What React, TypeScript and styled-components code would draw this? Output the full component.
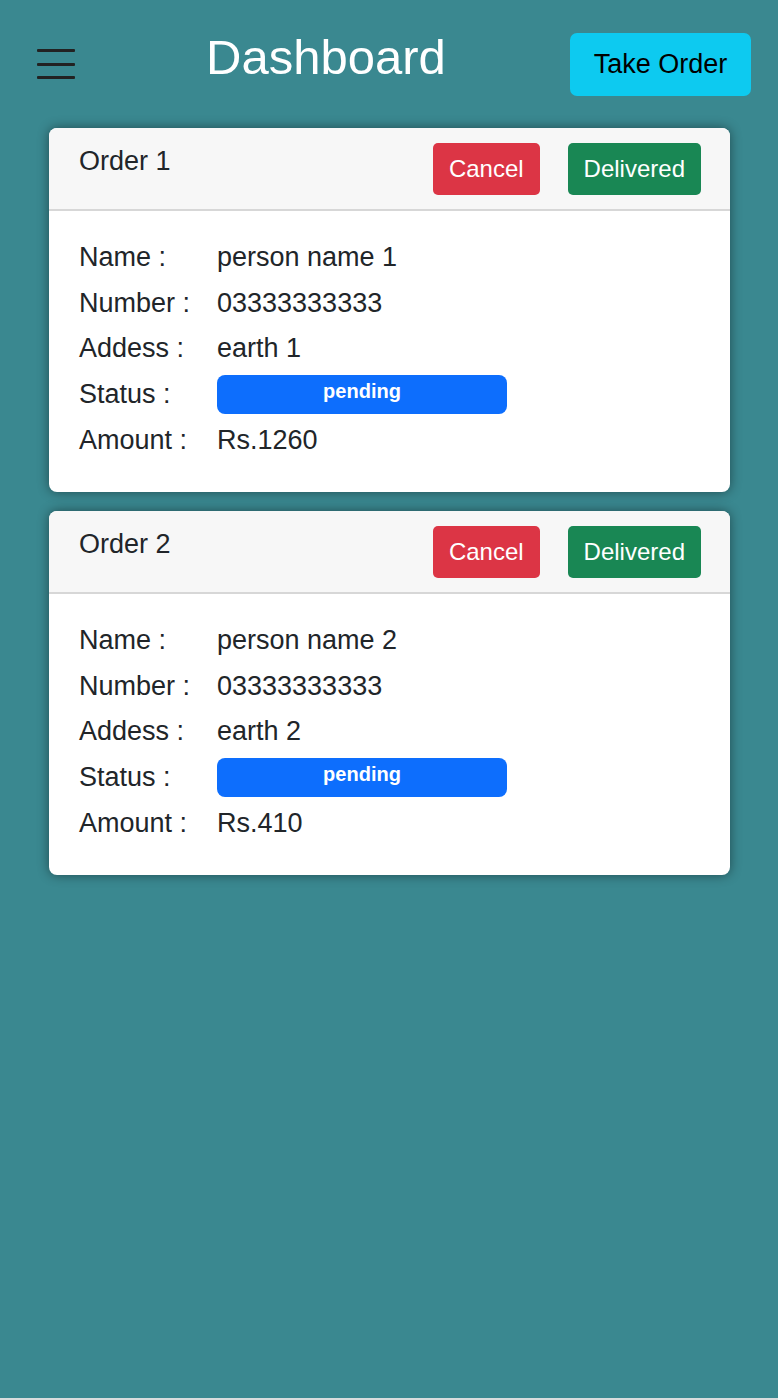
import React from 'react';
import styled, { createGlobalStyle } from 'styled-components';

type TOrder = {
  id: number;
  name: string;
  number: string;
  address: string;
  status: string;
  amount: number;
};

const orders: TOrder[] = [
  { id: 1, name: 'person name 1', number: '03333333333', address: 'earth 1', status: 'pending', amount: 1260 },
  { id: 2, name: 'person name 2', number: '03333333333', address: 'earth 2', status: 'pending', amount: 410 },
];

const GlobalStyle = createGlobalStyle`
  body {
    margin: 0;
    background: #d9dcdd;
    font-family: "Liberation Sans", Arial, sans-serif;
  }
`;

const OrderCard: React.FC<{ order: TOrder }> = ({ order }) => (
  <Card>
    <CardHeader>
      <OrderTitle>{`Order ${order.id}`}</OrderTitle>
      <Actions>
        <ActionButton variant="danger">Cancel</ActionButton>
        <ActionButton variant="success">Delivered</ActionButton>
      </Actions>
    </CardHeader>
    <CardBody>
      <Label>Name :</Label>
      <Value>{order.name}</Value>
      <Label>Number :</Label>
      <Value>{order.number}</Value>
      <Label>Addess :</Label>
      <Value>{order.address}</Value>
      <Label>Status :</Label>
      <Value>
        <StatusBadge>{order.status}</StatusBadge>
      </Value>
      <Label>Amount :</Label>
      <Value>{`Rs.${order.amount}`}</Value>
    </CardBody>
  </Card>
);

export default function App() {
  return (
    <>
      <GlobalStyle />
      <Page>
        <NavBar>
          <MenuToggle aria-label="menu">
            <span />
            <span />
            <span />
          </MenuToggle>
          <Title>Dashboard</Title>
          <TakeOrderButton>Take Order</TakeOrderButton>
        </NavBar>
        <OrderList>
          {orders.map((order) => (
            <OrderCard key={order.id} order={order} />
          ))}
        </OrderList>
      </Page>
    </>
  );
}

const Page = styled.div`
  min-height: 1398px;
  background: #3a8890;
`;

const NavBar = styled.header`
  display: flex;
  align-items: center;
  height: 128px;
  padding: 0 27px 0 37px;
  box-sizing: border-box;
`;

const MenuToggle = styled.button`
  display: flex;
  flex-direction: column;
  justify-content: space-between;
  width: 38px;
  height: 30px;
  padding: 0;
  border: none;
  background: transparent;

  span {
    display: block;
    height: 3px;
    border-radius: 1px;
    background: #222;
  }
`;

const Title = styled.h1`
  margin: 0 0 14px 131px;
  font-size: 49px;
  font-weight: 400;
  color: #fff;
`;

const TakeOrderButton = styled.button`
  margin-left: auto;
  width: 181px;
  height: 63px;
  border: none;
  border-radius: 7px;
  background: #0dcaf0;
  color: #000;
  font-family: inherit;
  font-size: 27px;
`;

const OrderList = styled.main`
  display: flex;
  flex-direction: column;
  gap: 19px;
  padding: 0 48px 0 49px;
`;

const Card = styled.section`
  background: #fff;
  border-radius: 8px;
  overflow: hidden;
  box-shadow: 0 0 12px rgba(0, 0, 0, 0.45);
  color: #212529;
`;

const CardHeader = styled.div`
  display: flex;
  justify-content: space-between;
  align-items: flex-start;
  padding: 15px 29px 14px 30px;
  background: #f7f7f7;
  border-bottom: 2px solid #d7d7d7;
`;

const OrderTitle = styled.div`
  font-size: 27px;
  line-height: 36px;
`;

const Actions = styled.div`
  display: flex;
  gap: 28px;
`;

const ActionButton = styled.button<{ variant: 'danger' | 'success' }>`
  height: 52px;
  padding: 0 16px;
  border: none;
  border-radius: 5px;
  background: ${({ variant }) => (variant === 'danger' ? '#dc3545' : '#198754')};
  color: #fff;
  font-family: inherit;
  font-size: 24px;
`;

const CardBody = styled.div`
  display: grid;
  grid-template-columns: 138px 1fr;
  grid-auto-rows: 45.6px;
  align-items: center;
  padding: 24px 30px 29px;
  font-size: 27px;
`;

const Label = styled.div``;

const Value = styled.div``;

const StatusBadge = styled.div`
  width: 290px;
  height: 39px;
  padding-top: 5px;
  box-sizing: border-box;
  border-radius: 8px;
  background: #0d6efd;
  color: #fff;
  font-size: 20px;
  font-weight: 700;
  text-align: center;
`;
